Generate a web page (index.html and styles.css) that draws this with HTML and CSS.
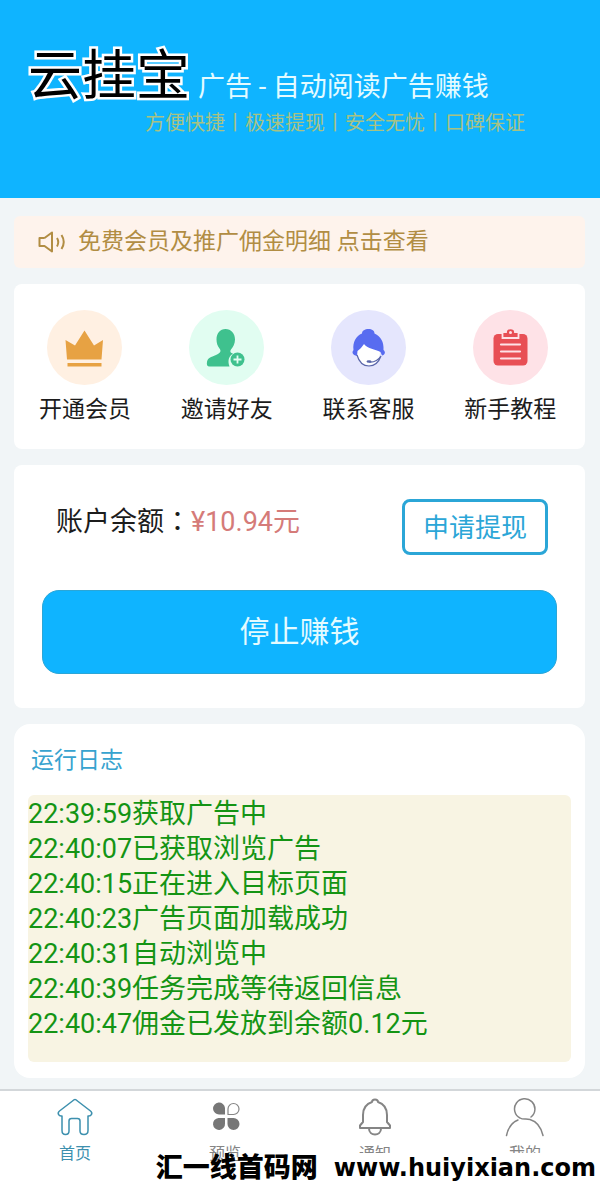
FILE: index.html
```html
<!DOCTYPE html>
<html lang="zh-CN">
<head>
<meta charset="utf-8">
<meta name="viewport" content="width=device-width, initial-scale=1">
<title>云挂宝</title>
<link rel="stylesheet" href="styles.css">
</head>
<body>
<header class="hero">
  <div class="hero-row">
    <div class="logo">云挂宝</div>
    <h1 class="hero-title">广告 - 自动阅读广告赚钱</h1>
  </div>
  <p class="hero-sub">方便快捷丨极速提现丨安全无忧丨口碑保证</p>
</header>

<main class="content">
  <a class="notice" href="#">
    <svg class="notice-icon" viewBox="0 0 28 24" aria-hidden="true">
      <path d="M6.500 8H1.500V16H6.500L14 21.500V2.500L6.500 8M19 8Q21.500 12 19 16.500M23.500 5Q28 12 23.500 19"/>
    </svg>
    <span>免费会员及推广佣金明细 点击查看</span>
  </a>

  <nav class="card quick">
    <a class="quick-item" href="#">
      <svg class="quick-icon" viewBox="0 0 75 75" aria-hidden="true">
        <circle cx="37.500" cy="37.500" r="37.500" fill="#fff0e2"/>
        <path fill="#e7a243" d="M18.500 30L28 35.500L37.500 20.500L47 35.500L56 30L54.500 49.500H20ZM20.500 53H54.500V56.500H20.500Z"/>
      </svg>
      <span>开通会员</span>
    </a>
    <a class="quick-item" href="#">
      <svg class="quick-icon" viewBox="0 0 75 75" aria-hidden="true">
        <circle cx="37.500" cy="37.500" r="37.500" fill="#e1fdf1"/>
        <path fill="#3fc18e" d="M36.500 19C42 19 46 23.500 46 29.500C46 34 44 37 42 39.500C40.500 42 42 43 44 43.500C39.500 46.500 38.500 51 40.500 56.500H20.500C18 56.500 17.500 54.500 18 52C18.500 48 22 47 27 45C31.500 43 32.500 41 30.500 38.500C28.500 36 27.500 33 27.500 29.500C27.500 23.500 31 19 36.500 19Z"/>
        <circle cx="48.500" cy="49.500" r="7" fill="#3fc18e"/>
        <path d="M48.500 45.500V53.500M44.500 49.500H52.500" stroke="#e1fdf1" stroke-width="1.800"/>
      </svg>
      <span>邀请好友</span>
    </a>
    <a class="quick-item" href="#">
      <svg class="quick-icon" viewBox="0 0 75 75" aria-hidden="true">
        <circle cx="37.500" cy="37.500" r="37.500" fill="#e5e6fd"/>
        <path fill="#fff" d="M26 41C29 39 31 37 33 34C37 38 44 38 49 41C49 49 45 55 37.500 55C30 55 26 49 26 41Z"/>
        <path fill="#586cf0" d="M31 23.500C31 20.500 34 19 37.500 19C41 19 43.500 20.500 43.500 23.500C50 26.500 53 32 52.500 40C55 42 54 45 51 45.500L49.500 42C44 39 37 39 33 34C31 37 29 39 26.500 41L26 46C21.500 45 20.500 42.500 22.500 40C21.500 32 25 26 31 23.500Z"/>
        <path d="M26 45C28 52 32 56 38 56C44 56 48 51.500 50 46C47 50.500 43 52.500 38 52" fill="none" stroke="#5965a8" stroke-width="1.200"/>
        <ellipse cx="38" cy="51.500" rx="2.500" ry="1.300" fill="#5965a8"/>
      </svg>
      <span>联系客服</span>
    </a>
    <a class="quick-item" href="#">
      <svg class="quick-icon" viewBox="0 0 75 75" aria-hidden="true">
        <circle cx="37.500" cy="37.500" r="37.500" fill="#fee2e7"/>
        <rect x="20.500" y="24" width="34" height="31.500" rx="4.500" fill="#e84f55"/>
        <path fill="#e84f55" stroke="#fee2e7" stroke-width="1.800" d="M29.500 22H33C33 17 42 17 42 22H45.500V28H29.500Z"/>
        <circle cx="37.500" cy="22.500" r="1.500" fill="#fee2e7"/>
        <path d="M28 34.500H47M28 41.500H47M28 48.500H47" stroke="#fee2e7" stroke-width="2.200" stroke-linecap="round"/>
      </svg>
      <span>新手教程</span>
    </a>
  </nav>

  <section class="card account">
    <div class="account-row">
      <p class="balance">账户余额<span class="colon" lang="zh-TW">：</span><span class="amount">¥10.94元</span></p>
      <button class="withdraw" type="button">申请提现</button>
    </div>
    <button class="stop" type="button">停止赚钱</button>
  </section>

  <section class="card log">
    <h2 class="log-title">运行日志</h2>
    <ul class="log-list">
      <li>22:39:59获取广告中</li>
      <li>22:40:07已获取浏览广告</li>
      <li>22:40:15正在进入目标页面</li>
      <li>22:40:23广告页面加载成功</li>
      <li>22:40:31自动浏览中</li>
      <li>22:40:39任务完成等待返回信息</li>
      <li>22:40:47佣金已发放到余额0.12元</li>
    </ul>
  </section>
</main>

<footer class="tabbar">
  <nav class="tabs">
    <a class="tab tab-active" href="#">
      <svg class="tab-icon" viewBox="0 0 40 40" aria-hidden="true">
        <path d="M20 2.500Q19 2.500 17.500 4L4.500 14C2 16 3.500 19.500 7 19V33.500Q7 37.500 10.500 37.500Q14 37.500 14 34V24Q14 21.500 16.500 21.500H22.500Q25 21.500 25 24V34Q25 37.500 29 37.500Q33 37.500 33 33.500V19C36.500 19.500 38 16 35.500 14L22.500 4Q21 2.500 20 2.500Z"/>
      </svg>
      <span>首页</span>
    </a>
    <a class="tab" href="#">
      <svg class="tab-icon" viewBox="0 0 40 40" aria-hidden="true">
        <path fill="#777" stroke="none" d="M20 17.500H14.500A6 6 0 1 1 20 11ZM20 21V26.500A6 6 0 1 1 13.500 21ZM22.500 21H28.500A6 6 0 1 1 22.500 27Z"/>
        <path d="M23 17.500V12A5.500 5.500 0 1 1 28.500 17.500Z" stroke-width="1.200"/>
      </svg>
      <span>预览</span>
    </a>
    <a class="tab" href="#">
      <svg class="tab-icon" viewBox="0 0 40 40" aria-hidden="true">
        <path stroke-width="2" d="M17 5C17 1.500 23 1.500 23 5C29 7 32 12 32 18V25L35 28.500V31H5V28.500L8 25V18C8 12 11 7 17 5ZM14 31.500C14 39.500 26 39.500 26 31.500"/>
      </svg>
      <span>通知</span>
    </a>
    <a class="tab" href="#">
      <svg class="tab-icon" viewBox="0 0 40 40" aria-hidden="true">
        <path d="M26 20A10.200 10.200 0 1 0 15 21C18 23 21 21.500 25 22.500C32 24.500 36 30 38 38.500M1.500 38.500C3.500 29 8 25 13 23"/>
      </svg>
      <span>我的</span>
    </a>
  </nav>
  <div class="watermark">
    <span class="mark-name">汇一线首码网</span>
    <span class="mark-url">www.huiyixian.com</span>
  </div>
</footer>
</body>
</html>
```

FILE: styles.css
```css
* {
  box-sizing: border-box;
}

body {
  margin: 0;
  background: #f1f5f7;
  color: #1c1c1c;
  font-family: Roboto, "Noto Sans CJK SC", sans-serif;
  font-size: 23px;
}

h1,
h2,
p,
ul {
  margin: 0;
  padding: 0;
  font-weight: 400;
}

a {
  color: inherit;
  text-decoration: none;
}

button {
  font-family: inherit;
  cursor: pointer;
}

.hero {
  padding: 44px 28px 61px;
  background: #0fb4ff;
}

.hero-row {
  display: flex;
  align-items: flex-end;
  gap: 8px;
}

.logo {
  color: #000;
  font-size: 54px;
  font-weight: 400;
  line-height: 65px;
  white-space: nowrap;
  -webkit-text-stroke: 5px #fff;
  paint-order: stroke fill;
}

.hero-title {
  color: #e4fbff;
  font-size: 27px;
  line-height: 44px;
  white-space: nowrap;
}

.hero-sub {
  padding-left: 117px;
  color: #a8c283;
  font-size: 20px;
  line-height: 28px;
  white-space: nowrap;
}

.content {
  display: flex;
  flex-direction: column;
  gap: 16px;
  padding: 18px 15px 11px 14px;
}

.notice {
  display: flex;
  align-items: center;
  gap: 12px;
  padding: 8px 24px;
  border-radius: 6px;
  background: #fef3ec;
  color: #b18d43;
  line-height: 36px;
}

.notice-icon {
  width: 28px;
  height: 24px;
  fill: none;
  stroke: #b18d43;
  stroke-width: 2;
  stroke-linejoin: round;
}

.card {
  border-radius: 8px;
  background: #fff;
}

.quick {
  display: grid;
  grid-template-columns: repeat(4, 1fr);
  padding: 26px 4px 22px 0;
}

.quick-item {
  display: flex;
  flex-direction: column;
  align-items: center;
  gap: 8px;
  line-height: 34px;
}

.quick-icon {
  width: 75px;
  height: 75px;
}

.account {
  padding: 34px 28px;
}

.account-row {
  display: flex;
  justify-content: space-between;
  align-items: flex-start;
  padding: 0 9px 0 14px;
}

.balance {
  font-size: 27px;
  line-height: 42px;
}

.colon {
  font-family: "Noto Sans CJK TC", sans-serif;
}

.amount {
  color: #d57b79;
}

.withdraw {
  padding: 6px 18px 4px;
  border: 3px solid #2ba6d7;
  border-radius: 8px;
  background: #fff;
  color: #2ba6d7;
  font-size: 26px;
  line-height: 40px;
}

.stop {
  display: block;
  width: 100%;
  margin-top: 35px;
  padding: 20px;
  border: 1px solid #2ba6d7;
  border-radius: 17px;
  background: #0fb4ff;
  color: #e4fbff;
  font-size: 30px;
  line-height: 42px;
}

.log {
  padding: 20px 14px 16px;
  border-radius: 16px;
}

.log-title {
  padding-left: 3px;
  color: #37a3cf;
  font-size: 23px;
  line-height: 34px;
}

.log-list {
  margin-top: 17px;
  padding: 2px 0 20px;
  border-radius: 6px;
  background: #f8f4e3;
  color: #149414;
  font-size: 27px;
  line-height: 35px;
  list-style: none;
}

.tabbar {
  position: relative;
  border-top: 2px solid #d3d7da;
  background: #fff;
}

.tabs {
  display: grid;
  grid-template-columns: repeat(4, 1fr);
  padding: 6px 0 17px;
}

.tab {
  display: flex;
  flex-direction: column;
  align-items: center;
  gap: 5px;
  color: #858585;
  font-size: 16px;
  line-height: 24px;
}

.tab-active {
  color: #3d90ae;
}

.tab-icon {
  width: 40px;
  height: 40px;
  fill: none;
  stroke: currentColor;
  stroke-width: 1.500;
  stroke-linejoin: round;
  stroke-linecap: round;
}

.watermark {
  position: absolute;
  right: 0;
  bottom: 0;
  display: flex;
  align-items: center;
  color: #000;
  font-weight: 900;
  line-height: 30px;
  white-space: nowrap;
}

.mark-name {
  font-size: 27px;
}

.mark-url {
  padding: 0 4px 0 16px;
  background: #fff;
  font-family: "DejaVu Sans", sans-serif;
  font-size: 24px;
  font-weight: 700;
}
```
